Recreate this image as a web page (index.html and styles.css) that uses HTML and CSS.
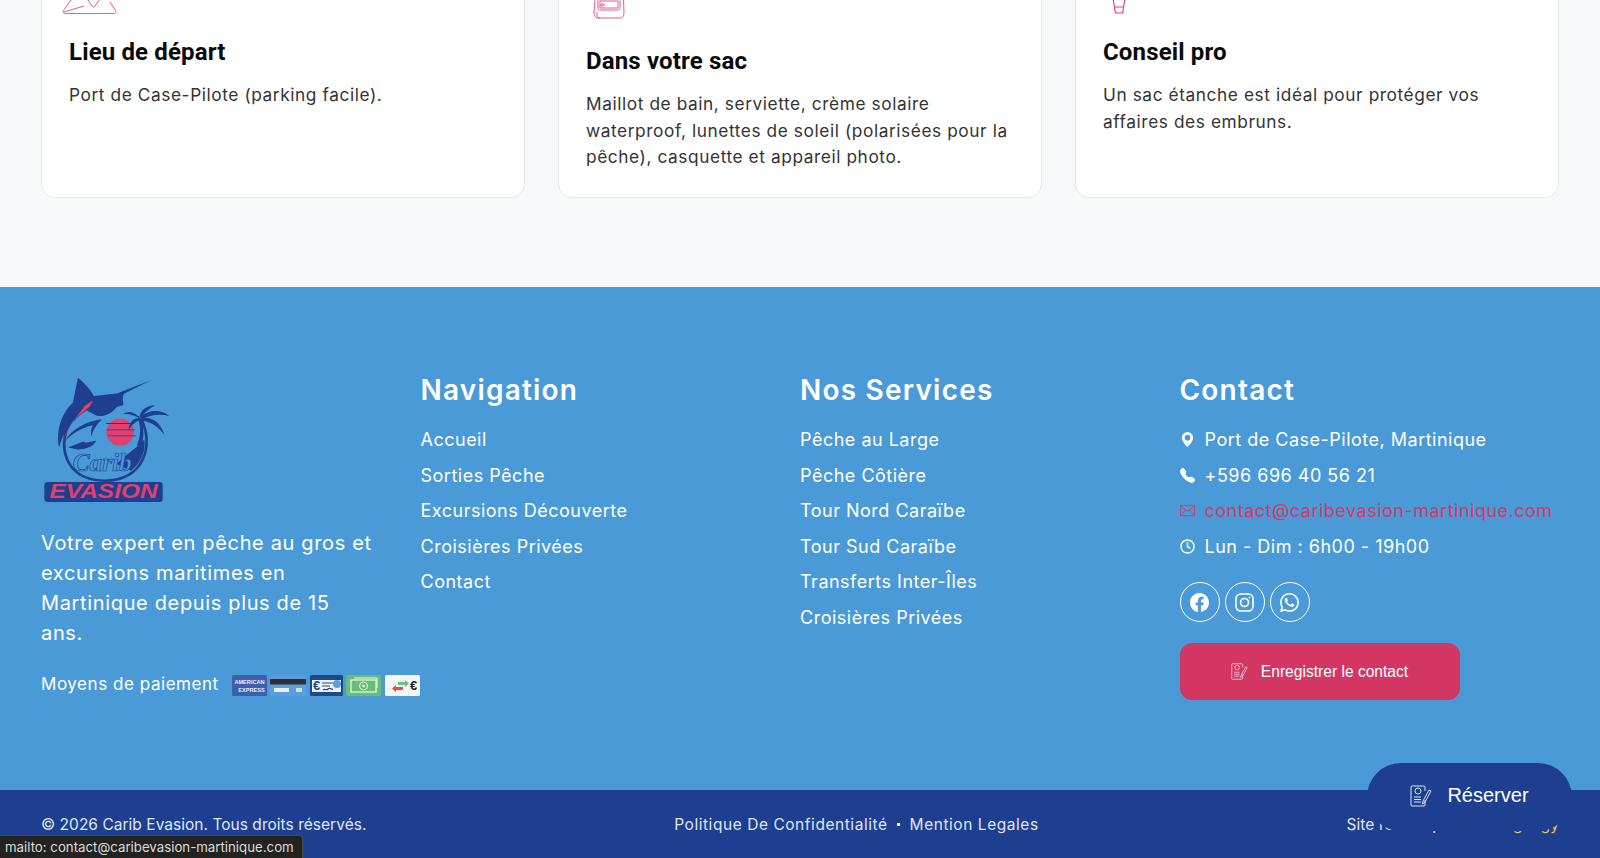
FILE: index.html
```html
<!DOCTYPE html>
<html lang="fr">
<head>
<meta charset="utf-8">
<title>Carib Evasion</title>
<link rel="stylesheet" href="styles.css">
</head>
<body>
<div class="page">
  <section class="tips">
    <article class="card">
      <svg class="tip-icon icon-map" viewBox="0 0 56 56" fill="none"><path d="M9 42 1.500 52.500c-.8 1.200-.2 3 1 3h50c1.200 0 1.800-1.800 1-3L48 44M2 54l20-6M26 42l4 6c1 1 2 1 3 0l5-7"/></svg>
      <h3>Lieu de départ</h3>
      <p>Port de Case-Pilote (parking facile).</p>
    </article>
    <article class="card">
      <svg class="tip-icon icon-bag" viewBox="0 0 34 65" fill="none"><path d="M4 30 2 54c0 3 1 6 4 6h22c3 0 4-3 4-6L31 30M5 54v3c0 2 1 3 3 3M8 30h18c1 0 2 1 2 2v18c0 1-1 2-2 2H8c-1 0-2-1-2-2V32c0-1 1-2 2-2Z"/><path d="M8 43h18v7H8zM9 46h3v2H9z"/></svg>
      <h3>Dans votre sac</h3>
      <p>Maillot de bain, serviette, crème solaire waterproof, lunettes de soleil (polarisées pour la pêche), casquette et appareil photo.</p>
    </article>
    <article class="card">
      <svg class="tip-icon icon-bulb" viewBox="0 0 20 56" fill="none"><path d="M5 40l2 13c0 1 1 2 2 2h4c1 0 2-1 2-2l2-13M7 49h8"/></svg>
      <h3>Conseil pro</h3>
      <p>Un sac étanche est idéal pour protéger vos affaires des embruns.</p>
    </article>
  </section>

  <footer class="site-footer">
    <div class="footer-main">
      <div class="col col-brand">
        <svg class="logo" viewBox="40 35 385 385" role="img" aria-label="Carib Evasion">
          <path class="logo-ring" d="M120 180C85 235 100 350 225 350C345 350 375 240 335 165"/>
          <path class="logo-dark" d="M145 40C165 55 182 75 193 95L262 88 365 48 285 88C278 95 280 112 283 122L262 128C250 145 225 158 205 155 192 150 182 145 172 138 130 165 100 205 88 250 78 195 98 145 130 115Z"/>
          <path class="logo-pink" d="M118 190 165 125 190 108 182 125 130 170 95 240Z"/>
          <path class="logo-dark" d="M105 232C125 195 170 170 218 165 200 180 190 200 185 218 183 200 186 190 190 183 155 190 125 210 105 232Z"/>
          <circle class="logo-pink" cx="272" cy="204" r="41"/>
          <path class="logo-dark" d="M230 176h84v3h-84zM232 196h84v2h-84zM236 214h84v2h-84zM322 245C335 215 335 190 325 160L333 160C345 190 345 220 335 245Z"/>
          <path class="logo-dark" d="M330 158C310 140 295 140 280 150 300 148 315 155 330 162ZM330 158C335 135 350 125 378 122 360 132 345 145 335 160ZM333 158C360 135 395 135 420 155 390 148 360 152 338 165ZM335 162C365 155 395 175 405 212 385 185 360 170 337 170ZM328 162C310 160 300 175 296 200 308 180 318 172 332 168Z"/>
          <path class="logo-dark" d="M115 250 145 238 162 232 168 236 200 230C195 245 170 256 145 256Z"/>
          <path class="logo-dark" d="M262 300C290 270 325 250 345 225 350 260 335 295 305 320Z"/>
          <text class="logo-script" x="218" y="320" text-anchor="middle">Carib</text>
          <rect class="logo-banner" x="44" y="354" width="356" height="60" rx="10"/>
          <text class="logo-word" x="222" y="403" text-anchor="middle" textLength="325" lengthAdjust="spacingAndGlyphs">EVASION</text>
        </svg>
        <p class="about">Votre expert en pêche au gros et excursions maritimes en Martinique depuis plus de 15 ans.</p>
        <div class="payments">
          <span class="pay-label">Moyens de paiement</span>
          <div class="pay-icons">
            <svg viewBox="0 0 35 21"><rect width="35" height="21" rx="1.500" fill="#3d5fae"/><text class="amex" x="17.500" y="9" text-anchor="middle">AMERICAN</text><text class="amex" x="19.500" y="17" text-anchor="middle">EXPRESS</text></svg>
            <svg viewBox="0 0 36 21"><rect width="36" height="21" rx="1.500" fill="#5b9ee0"/><rect y="4" width="36" height="5.500" fill="#33302f"/><rect x="4" y="13" width="15" height="4" fill="#e8f0fa"/><rect x="26" y="13" width="6" height="4" fill="#d9dcc8"/></svg>
            <svg viewBox="0 0 33 21"><rect width="33" height="21" rx="1.500" fill="#1d4a85"/><rect x="2" y="5" width="29" height="12" fill="#eef3f8"/><text class="cheque" x="3" y="15">€</text><path d="M12 8h11M12 11h8M13 15c2-2 3 1 5-1s3 1 5 0" stroke="#1d4a85" stroke-width="1.200" fill="none"/><circle cx="27" cy="9" r="4" fill="#5b9ee0"/></svg>
            <svg viewBox="0 0 35 21"><rect width="35" height="21" rx="1.500" fill="#68bd77"/><rect x="5" y="5" width="25" height="12" fill="none" stroke="#eef7ea" stroke-width="1.200"/><path d="M8 3h23v10" fill="none" stroke="#eef7ea"/><circle cx="17.500" cy="11" r="4" fill="none" stroke="#eef7ea"/><circle cx="17.500" cy="11" r="1.300" fill="#eef7ea"/></svg>
            <svg viewBox="0 0 35 21"><rect width="35" height="21" rx="1.500" fill="#f3f5f7"/><path d="M13 7h7V5l4 3.500-4 3.500v-2h-7z" fill="#5fc48a"/><path d="M18 12h-7v-2l-4 3.500 4 3.500v-2h7z" fill="#e0533f"/><text class="euro" x="25" y="15">€</text></svg>
          </div>
        </div>
      </div>

      <nav class="col">
        <h4>Navigation</h4>
        <ul class="links">
          <li>Accueil</li>
          <li>Sorties Pêche</li>
          <li>Excursions Découverte</li>
          <li>Croisières Privées</li>
          <li>Contact</li>
        </ul>
      </nav>

      <nav class="col">
        <h4>Nos Services</h4>
        <ul class="links">
          <li>Pêche au Large</li>
          <li>Pêche Côtière</li>
          <li>Tour Nord Caraïbe</li>
          <li>Tour Sud Caraïbe</li>
          <li>Transferts Inter-Îles</li>
          <li>Croisières Privées</li>
        </ul>
      </nav>

      <div class="col">
        <h4>Contact</h4>
        <ul class="links contact">
          <li><svg class="ci" viewBox="0 0 16 16"><path fill="currentColor" d="M8 16s6-5.686 6-10A6 6 0 0 0 2 6c0 4.314 6 10 6 10zm0-7a3 3 0 1 1 0-6 3 3 0 0 1 0 6z"/></svg>Port de Case-Pilote, Martinique</li>
          <li><svg class="ci" viewBox="0 0 16 16"><path fill="currentColor" d="M1.885.511a1.745 1.745 0 0 1 2.61.163L6.29 2.98c.329.423.445.974.315 1.494l-.547 2.19a.678.678 0 0 0 .178.643l2.457 2.457a.678.678 0 0 0 .644.178l2.189-.547a1.745 1.745 0 0 1 1.494.315l2.306 1.794c.829.645.905 1.870.163 2.611l-1.034 1.034c-.74.74-1.846 1.065-2.877.702a18.634 18.634 0 0 1-7.010-4.420 18.634 18.634 0 0 1-4.420-7.009c-.362-1.030-.037-2.137.703-2.877L1.885.511z"/></svg>+596 696 40 56 21</li>
          <li class="is-hover"><svg class="ci" viewBox="0 0 16 12" fill="none" stroke="currentColor"><rect x=".5" y=".5" width="15" height="11"/><path d="M.5 1 8 7l7.500-6M.5 11 6 5.500M15.500 11 10 5.500"/></svg>contact@caribevasion-martinique.com</li>
          <li><svg class="ci" viewBox="0 0 16 16" fill="none" stroke="currentColor" stroke-width="1.500"><circle cx="8" cy="8" r="7"/><path d="M8 3.500V8l3 2"/></svg>Lun - Dim : 6h00 - 19h00</li>
        </ul>
        <div class="socials">
          <span class="social"><svg viewBox="0 0 16 16"><path fill="#fff" d="M16 8.049c0-4.446-3.582-8.050-8-8.050C3.580 0-.002 3.603-.002 8.050c0 4.017 2.926 7.347 6.750 7.951v-5.625h-2.030V8.050H6.750V6.275c0-2.017 1.195-3.131 3.022-3.131.876 0 1.791.157 1.791.157v1.980h-1.009c-.993 0-1.303.621-1.303 1.258v1.510h2.218l-.354 2.326H9.250V16c3.824-.604 6.750-3.934 6.750-7.951z"/></svg></span>
          <span class="social"><svg viewBox="0 0 18 18" fill="none" stroke="#fff" stroke-width="1.500"><rect x=".9" y=".9" width="16.200" height="16.200" rx="4.500"/><circle cx="9" cy="9" r="3.800"/><circle cx="13.700" cy="4.300" r=".6" fill="#fff" stroke-width=".6"/></svg></span>
          <span class="social"><svg viewBox="0 0 16 16"><path fill="#fff" d="M13.601 2.326A7.854 7.854 0 0 0 7.994 0C3.627 0 .068 3.558.064 7.926c0 1.399.366 2.760 1.057 3.965L0 16l4.204-1.102a7.933 7.933 0 0 0 3.790.965h.004c4.368 0 7.926-3.558 7.930-7.930A7.898 7.898 0 0 0 13.600 2.326zM7.994 14.521a6.573 6.573 0 0 1-3.356-.920l-.240-.144-2.494.654.666-2.433-.156-.251a6.560 6.560 0 0 1-1.007-3.505c0-3.626 2.957-6.584 6.591-6.584a6.560 6.560 0 0 1 4.660 1.931 6.557 6.557 0 0 1 1.928 4.660c-.004 3.639-2.961 6.592-6.592 6.592zm3.615-4.934c-.197-.099-1.170-.578-1.353-.646-.182-.065-.315-.099-.445.099-.133.197-.513.646-.627.775-.114.133-.232.148-.430.050-.197-.1-.836-.308-1.592-.985-.590-.525-.985-1.175-1.103-1.372-.114-.198-.011-.304.088-.403.087-.088.197-.232.296-.346.1-.114.133-.198.198-.330.065-.134.034-.248-.015-.347-.050-.099-.445-1.076-.612-1.470-.160-.389-.323-.335-.445-.340-.114-.007-.247-.007-.380-.007a.729.729 0 0 0-.529.247c-.182.198-.691.677-.691 1.654 0 .977.710 1.916.810 2.049.098.133 1.394 2.132 3.383 2.992.470.205.840.326 1.129.418.475.152.904.129 1.246.080.380-.058 1.171-.480 1.338-.943.164-.464.164-.860.114-.943-.049-.084-.182-.133-.380-.232z"/></svg></span>
        </div>
        <div class="save-btn">
          <svg class="doc-icon doc-small" viewBox="0 0 22 22" fill="none" stroke="currentColor"><path d="M15 6V2c0-.6-.4-1-1-1H2c-.6 0-1 .4-1 1v18c0 .6.4 1 1 1h12c.6 0 1-.4 1-1v-5"/><circle cx="8" cy="6" r="3"/><path d="M4 12h7M4 14.500h7M4 17h7M21 6l-2-1-6 11-.5 3 2.500-2z"/></svg>
          <span>Enregistrer le contact</span>
        </div>
      </div>
    </div>

    <div class="footer-bottom">
      <span class="copyright">© 2026 Carib Evasion. Tous droits réservés.</span>
      <span class="legal"><span>Politique De Confidentialité</span><i class="dot"></i><span>Mention Legales</span></span>
      <span class="credit">Site réalisé par <b>Web Signagy</b></span>
    </div>
  </footer>

  <div class="reserve">
    <svg class="doc-icon" viewBox="0 0 22 22" fill="none" stroke="currentColor"><path d="M15 6V2c0-.6-.4-1-1-1H2c-.6 0-1 .4-1 1v18c0 .6.4 1 1 1h12c.6 0 1-.4 1-1v-5"/><circle cx="8" cy="6" r="3"/><path d="M4 12h7M4 14.500h7M4 17h7M21 6l-2-1-6 11-.5 3 2.500-2z"/></svg>
    <span>Réserver</span>
  </div>
  <div class="status-tip">mailto: contact@caribevasion-martinique.com</div>
</div>
</body>
</html>
```

FILE: styles.css
```css
* { box-sizing: border-box; }
html, body { margin: 0; padding: 0; }
body { font-family: "Inter", "Liberation Sans", sans-serif; color: #333; background: #f7f8fa; }
.page { position: relative; width: 1600px; height: 858px; overflow: hidden; background: #f7f8fa; }

.tips { display: grid; grid-template-columns: repeat(3, 484px); gap: 33px; padding: 0 41px; margin-top: -70px; padding-bottom: 89px; }
.card { background: #fff; border: 1px solid #e5e7eb; border-radius: 14px; padding: 27px 27px 28px; height: 268px; }
.tip-icon { display: block; stroke: #e85a8a; stroke-width: 1; }
.icon-map { width: 56px; height: 56px; margin: 0 0 22px -7px; }
.icon-bag { width: 34px; height: 65px; margin: 0 0 22px 6px; }
.icon-bulb { width: 20px; height: 56px; margin: 0 0 22px 5px; stroke-width: 1.200; stroke: #e8457a; }
.card h3 { margin: 0 0 14px; font: 700 24px/32px "Roboto", sans-serif; letter-spacing: .15px; color: #0a0a0a; }
.card p { margin: 0; font-size: 17.300px; line-height: 26.600px; color: #333; letter-spacing: .58px; }

.site-footer { background: #4a9ad7; color: #fff; }
.footer-main { display: grid; grid-template-columns: repeat(4, 379.500px); padding: 89px 41px 89px; height: 503px; }
.col { min-width: 0; }
.logo { display: block; width: 128px; height: 128px; margin: 0 0 24px 2px; }
.logo-ring { fill: none; stroke: #1e3f8f; stroke-width: 8; }
.logo-dark { fill: #1e3f8f; }
.logo-pink { fill: #e0416f; }
.logo-script { font: italic 700 76px "Liberation Serif", serif; fill: #4a9ad7; stroke: #1e3f8f; stroke-width: 2; }
.logo-banner { fill: #1e3f8f; }
.logo-word { font: italic 700 60px "Liberation Sans", sans-serif; fill: #e0416f; }
.about { margin: 0 0 24px; width: 333px; font-size: 20px; line-height: 30px; letter-spacing: .65px; }
.payments { display: flex; align-items: center; gap: 13px; width: 400px; font-size: 17px; letter-spacing: .55px; }
.pay-icons { display: flex; gap: 3.500px; flex: none; margin-top: 3px; }
.pay-icons svg { display: block; height: 21px; width: auto; }
.amex { font: 700 5.600px "Liberation Sans", sans-serif; fill: #e8eefa; letter-spacing: 0; }
.cheque { font: 700 13px "Liberation Sans", sans-serif; fill: #1d4a85; }
.euro { font: 700 13px "Liberation Sans", sans-serif; fill: #222; }

h4 { margin: 0 0 18px; font: 600 28px/28px "Inter", sans-serif; letter-spacing: 1.200px; }
.links { list-style: none; margin: 0; padding: 0; font-size: 18px; line-height: 35.600px; letter-spacing: .5px; }
.contact li { display: flex; align-items: center; }
.ci { width: 15px; height: 15px; margin-right: 10px; flex: none; }
.is-hover { color: #d63865; }
.socials { display: flex; gap: 5px; margin-top: 18px; }
.social { width: 40px; height: 40px; border: 1.500px solid #fff; border-radius: 50%; display: flex; align-items: center; justify-content: center; }
.social svg { width: 19px; height: 19px; }
.save-btn { display: flex; align-items: center; justify-content: center; gap: 13px; width: 280px; height: 57px; margin-top: 21px; background: #d43664; border-radius: 12px; font: 15.600px "Liberation Sans", sans-serif; color: #fff; }
.doc-icon { width: 22px; height: 22px; flex: none; }
.doc-small { width: 17px; height: 17px; opacity: .8; }

.footer-bottom { display: flex; justify-content: space-between; align-items: center; height: 68px; padding: 0 41px; background: #1e3f8f; font-size: 15.500px; color: #dfe6f5; letter-spacing: .55px; }
.copyright { letter-spacing: .03px; }
.legal { display: flex; align-items: center; gap: 9.500px; }
.dot { width: 3px; height: 3px; background: #fff; }
.credit { letter-spacing: .1px; }
.credit b { font-weight: 400; color: #e9c74a; }

.reserve { position: absolute; left: 1367px; top: 763px; width: 205px; height: 68px; padding-bottom: 3px; border-radius: 34px; background: #1e3f8f; color: #fff; display: flex; align-items: center; justify-content: center; gap: 15px; font: 20px "Liberation Sans", sans-serif; }
.reserve .doc-icon { color: #dbe4f5; }
.status-tip { position: absolute; left: 0; bottom: 0; width: 303px; height: 23px; padding: 0 5px; background: #222321; border: 1px solid #4a4a48; border-bottom: 0; border-left: 0; border-radius: 0 4px 0 0; font: 13.250px/22px "Inter", sans-serif; color: #dddddd; white-space: nowrap; }
```
